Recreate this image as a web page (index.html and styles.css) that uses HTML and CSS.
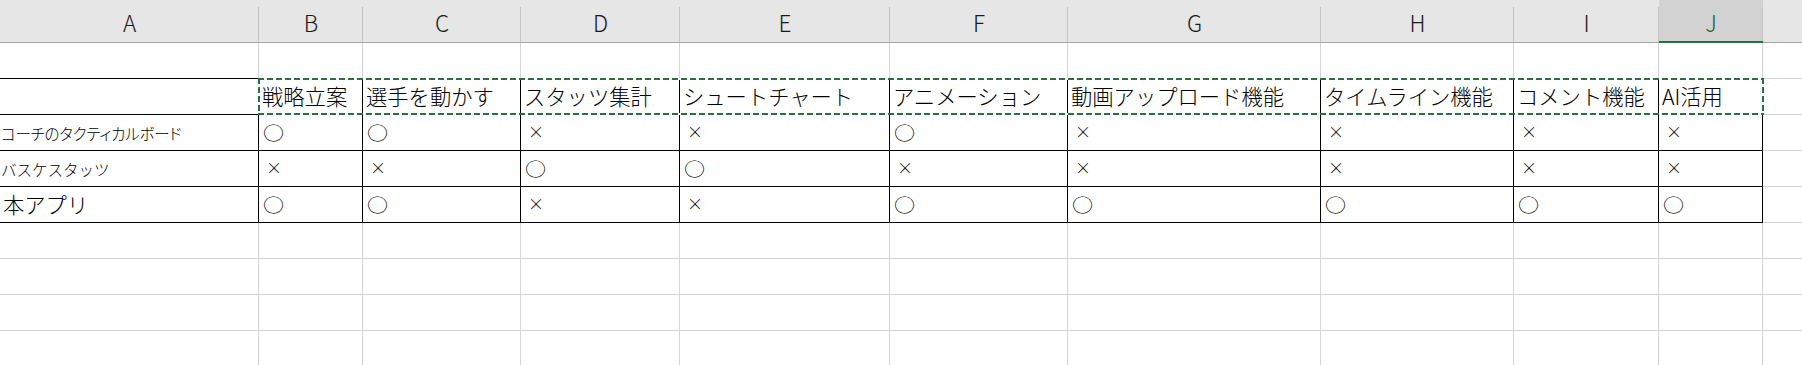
FILE: index.html
```html
<!DOCTYPE html>
<html lang="ja">
<head>
<meta charset="utf-8">
<title>比較表</title>
<link rel="stylesheet" href="styles.css">
</head>
<body>
<div class="sheet">
  <div class="colhead">A</div>
  <div class="colhead">B</div>
  <div class="colhead">C</div>
  <div class="colhead">D</div>
  <div class="colhead">E</div>
  <div class="colhead">F</div>
  <div class="colhead">G</div>
  <div class="colhead">H</div>
  <div class="colhead">I</div>
  <div class="colhead is-selected">J</div>
  <div class="colhead"></div>

  <div class="cell under-dark"></div>
  <div class="cell under-dark"></div>
  <div class="cell under-dark"></div>
  <div class="cell under-dark"></div>
  <div class="cell under-dark"></div>
  <div class="cell under-dark"></div>
  <div class="cell under-dark"></div>
  <div class="cell under-dark"></div>
  <div class="cell under-dark"></div>
  <div class="cell under-dark"></div>
  <div class="cell"></div>

  <div class="cell boxed"></div>
  <div class="cell boxed">戦略立案</div>
  <div class="cell boxed">選手を動かす</div>
  <div class="cell boxed">スタッツ集計</div>
  <div class="cell boxed">シュートチャート</div>
  <div class="cell boxed">アニメーション</div>
  <div class="cell boxed">動画アップロード機能</div>
  <div class="cell boxed">タイムライン機能</div>
  <div class="cell boxed">コメント機能</div>
  <div class="cell boxed">AI活用</div>
  <div class="cell"></div>

  <div class="cell boxed label-small label-tight">コーチのタクティカルボード</div>
  <div class="cell boxed"><span class="mark-o">○</span></div>
  <div class="cell boxed"><span class="mark-o">○</span></div>
  <div class="cell boxed"><span class="mark-x">×</span></div>
  <div class="cell boxed"><span class="mark-x">×</span></div>
  <div class="cell boxed"><span class="mark-o">○</span></div>
  <div class="cell boxed"><span class="mark-x">×</span></div>
  <div class="cell boxed"><span class="mark-x">×</span></div>
  <div class="cell boxed"><span class="mark-x">×</span></div>
  <div class="cell boxed"><span class="mark-x">×</span></div>
  <div class="cell"></div>

  <div class="cell boxed label-small">バスケスタッツ</div>
  <div class="cell boxed"><span class="mark-x">×</span></div>
  <div class="cell boxed"><span class="mark-x">×</span></div>
  <div class="cell boxed"><span class="mark-o">○</span></div>
  <div class="cell boxed"><span class="mark-o">○</span></div>
  <div class="cell boxed"><span class="mark-x">×</span></div>
  <div class="cell boxed"><span class="mark-x">×</span></div>
  <div class="cell boxed"><span class="mark-x">×</span></div>
  <div class="cell boxed"><span class="mark-x">×</span></div>
  <div class="cell boxed"><span class="mark-x">×</span></div>
  <div class="cell"></div>

  <div class="cell boxed">本アプリ</div>
  <div class="cell boxed"><span class="mark-o">○</span></div>
  <div class="cell boxed"><span class="mark-o">○</span></div>
  <div class="cell boxed"><span class="mark-x">×</span></div>
  <div class="cell boxed"><span class="mark-x">×</span></div>
  <div class="cell boxed"><span class="mark-o">○</span></div>
  <div class="cell boxed"><span class="mark-o">○</span></div>
  <div class="cell boxed"><span class="mark-o">○</span></div>
  <div class="cell boxed"><span class="mark-o">○</span></div>
  <div class="cell boxed"><span class="mark-o">○</span></div>
  <div class="cell"></div>

  <div class="cell"></div><div class="cell"></div><div class="cell"></div><div class="cell"></div><div class="cell"></div><div class="cell"></div><div class="cell"></div><div class="cell"></div><div class="cell"></div><div class="cell"></div><div class="cell"></div>
  <div class="cell"></div><div class="cell"></div><div class="cell"></div><div class="cell"></div><div class="cell"></div><div class="cell"></div><div class="cell"></div><div class="cell"></div><div class="cell"></div><div class="cell"></div><div class="cell"></div>
  <div class="cell"></div><div class="cell"></div><div class="cell"></div><div class="cell"></div><div class="cell"></div><div class="cell"></div><div class="cell"></div><div class="cell"></div><div class="cell"></div><div class="cell"></div><div class="cell"></div>
  <div class="cell"></div><div class="cell"></div><div class="cell"></div><div class="cell"></div><div class="cell"></div><div class="cell"></div><div class="cell"></div><div class="cell"></div><div class="cell"></div><div class="cell"></div><div class="cell"></div>

  <div class="marquee"></div>
</div>
</body>
</html>
```

FILE: styles.css
```css
* {
  box-sizing: border-box;
}

html, body {
  margin: 0;
  padding: 0;
  background: #ffffff;
  overflow: hidden;
}

body {
  width: 1802px;
  height: 365px;
  font-family: "Noto Sans CJK JP", "Noto Sans", sans-serif;
  font-weight: 300;
  color: #000;
}

.sheet {
  position: relative;
  display: grid;
  grid-template-columns: 259px 104px 158px 159px 210px 178px 253px 193px 145px 104px 200px;
  grid-template-rows: 43px repeat(9, 36px);
  width: max-content;
}

.colhead {
  background-color: #e6e6e6;
  background-image: linear-gradient(#c4c4c4, #c4c4c4);
  background-size: 1px calc(100% - 7px);
  background-position: right bottom;
  background-repeat: no-repeat;
  border-bottom: 1px solid #a6a6a6;
  text-align: center;
  font-size: 22.5px;
  line-height: 1;
  padding-top: 11px;
  color: #1a1a1a;
}

.colhead.is-selected {
  background-color: #d2d2d2;
  border-bottom: 2px solid #217346;
  color: #1d5e3a;
}

.cell {
  border-right: 1px solid #d4d4d4;
  border-bottom: 1px solid #d4d4d4;
  display: flex;
  align-items: flex-end;
  padding: 0 0 8px 3px;
  font-size: 21.3px;
  line-height: 1;
  white-space: nowrap;
  overflow: hidden;
}

.cell.under-dark {
  border-bottom-color: #000;
}

.cell.boxed {
  border-right-color: #000;
  border-bottom-color: #000;
}

.cell.label-small {
  font-size: 15.5px;
  padding-left: 1px;
  padding-bottom: 9px;
}

.cell.label-tight {
  font-feature-settings: "palt";
  letter-spacing: -0.2px;
}

.mark-o {
  display: inline-block;
  font-size: 21.5px;
  margin-left: 1px;
  transform: scale(0.98, 0.86);
  transform-origin: left bottom;
  margin-bottom: 1px;
}

.mark-x {
  display: inline-block;
  font-size: 16px;
  margin-left: 4px;
  margin-bottom: 3px;
}

.marquee {
  position: absolute;
  grid-row: 3 / 4;
  grid-column: 2 / 11;
  top: -1px;
  left: -1px;
  right: -1px;
  bottom: 0;
  pointer-events: none;
  background:
    repeating-linear-gradient(90deg, #217346 0 6px, #ffffff 6px 9px) left top / 100% 2px no-repeat,
    repeating-linear-gradient(90deg, #217346 0 6px, #ffffff 6px 9px) left bottom / 100% 2px no-repeat,
    repeating-linear-gradient(180deg, #217346 0 6px, #ffffff 6px 9px) left top / 2px 100% no-repeat,
    repeating-linear-gradient(180deg, #217346 0 6px, #ffffff 6px 9px) right top / 2px 100% no-repeat;
}
```
